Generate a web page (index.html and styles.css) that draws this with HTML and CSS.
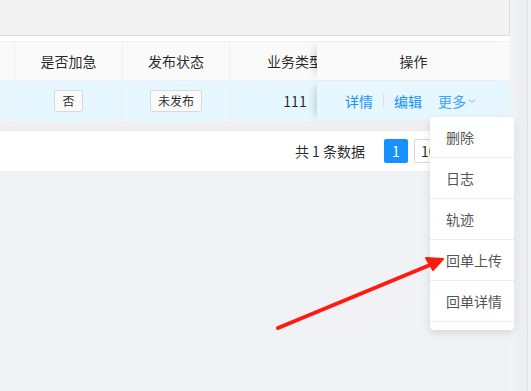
FILE: index.html
```html
<!DOCTYPE html>
<html lang="zh-CN">
<head>
  <meta charset="UTF-8">
  <title>订单列表</title>
  <link rel="stylesheet" href="styles.css">
</head>
<body>
  <div class="page">
    <div class="main">
      <div class="toolbar"></div>
      <div class="card-gap"></div>

      <!-- table, scrolled to the right, with the fixed action column -->
      <div class="table">
        <div class="tr thead">
          <div class="cell c-cut"></div>
          <div class="cell c-mid">是否加急</div>
          <div class="cell c-mid">发布状态</div>
          <div class="cell c-type"><span>业务类型</span></div>
          <div class="cell c-fixed">操作</div>
        </div>
        <div class="tr tbody">
          <div class="cell c-cut"></div>
          <div class="cell c-mid"><span class="tag">否</span></div>
          <div class="cell c-mid"><span class="tag">未发布</span></div>
          <div class="cell c-type"><span>111</span></div>
          <div class="cell c-fixed actions">
            <a class="link">详情</a>
            <i class="divider"></i>
            <a class="link">编辑</a>
            <a class="link more">更多
              <svg width="10" height="10" viewBox="0 0 10 10"><path d="M2 3.5 L5 6.5 L8 3.5" fill="none" stroke="#69b7ff" stroke-width="1"/></svg>
            </a>
          </div>
        </div>
      </div>

      <div class="table-gap"></div>

      <div class="pager">
        <span class="total">共 1 条数据</span>
        <span class="page-btn active">1</span>
        <span class="page-size">10条/页</span>
      </div>
    </div>
    <div class="gutter"></div>
    <div class="scrollbar"></div>
  </div>

  <!-- dropdown of "更多" -->
  <ul class="dropdown">
    <li>删除</li>
    <li>日志</li>
    <li>轨迹</li>
    <li>回单上传</li>
    <li>回单详情</li>
  </ul>

  <!-- annotation arrow -->
  <svg class="arrow" width="531" height="391" viewBox="0 0 531 391">
    <line x1="278" y1="328" x2="430" y2="265" stroke="#ff1a0f" stroke-width="4" stroke-linecap="round"/>
    <path d="M443 259 L426 258 L433 270 Z" fill="#ff1a0f" stroke="#ff1a0f" stroke-width="2" stroke-linejoin="round"/>
  </svg>
</body>
</html>
```

FILE: styles.css
```css
/* Global */
* {
  margin: 0;
  padding: 0;
  box-sizing: border-box;
}

body {
  background: #f0f2f5;
  font-family: "Noto Sans CJK SC", "Liberation Sans", sans-serif;
  font-size: 14px;
  color: rgba(0, 0, 0, 0.85);
  height: 391px;
  overflow: hidden;
}

.page {
  display: flex;
  height: 391px;
}

.main {
  width: 510px;
  flex-shrink: 0;
}

.gutter {
  width: 7px;
  background: #f3f3f3;
}

.scrollbar {
  flex: 1;
  background: #edeff4;
  border-right: 1px solid #e2e2e2;
  margin-right: 3px;
}

.toolbar {
  height: 36px;
  background: #f2f2f2;
  border-bottom: 1px solid #dcdcdc;
  border-right: 1px solid #dcdcdc;
}

.card-gap {
  height: 5px;
  background: #fff;
}

/* Table */
.table {
  background: #fff;
  border-top: 1px solid #f0f0f0;
}

.tr {
  display: flex;
  border-bottom: 1px solid #f0f0f0;
}

.thead {
  height: 39px;
  background: #fafafa;
}

.tbody {
  height: 41px;
  background: #e6f7ff;
}

.cell {
  display: flex;
  align-items: center;
  justify-content: center;
  border-right: 1px solid #f0f0f0;
  flex-shrink: 0;
}

.c-cut {
  width: 15px;
}

.c-mid {
  width: 108px;
}

.c-mid + .c-mid {
  width: 107px;
}

.c-type {
  width: 87px;
  overflow: hidden;
  justify-content: flex-start;
  border-right: none;
}

.c-type span {
  display: block;
  width: 130px;
  flex-shrink: 0;
  text-align: center;
}

.c-fixed {
  width: 193px;
  border-right: none;
  position: relative;
  background: inherit;
  box-shadow: -8px 0 8px -6px rgba(0, 0, 0, 0.18);
}

.tag {
  display: inline-block;
  height: 22px;
  line-height: 20px;
  padding: 0 7px;
  font-size: 12px;
  background: #fafafa;
  border: 1px solid #d9d9d9;
  border-radius: 2px;
}

.actions {
  justify-content: flex-start;
  padding-left: 28px;
}

.link {
  color: #1890ff;
  cursor: pointer;
}

.divider {
  display: inline-block;
  width: 1px;
  height: 14px;
  background: #e0e0e0;
  margin: 0 10px;
}

.more {
  margin-left: 16px;
  display: flex;
  align-items: center;
  color: #3ea0ff;
}

.more svg {
  margin-left: 1px;
}

.table-gap {
  height: 9px;
  background: #efefef;
}

/* Pagination */
.pager {
  height: 40px;
  background: #fff;
  display: flex;
  align-items: center;
  justify-content: flex-end;
  padding-right: 10px;
}

.total {
  margin-right: 19px;
}

.page-btn {
  width: 24px;
  height: 24px;
  line-height: 24px;
  text-align: center;
  border-radius: 2px;
}

.page-btn.active {
  background: #1890ff;
  color: #fff;
}

.page-size {
  margin-left: 6px;
  width: 86px;
  height: 24px;
  line-height: 22px;
  padding-left: 6px;
  border: 1px solid #d9d9d9;
  border-radius: 2px;
}

/* Dropdown */
.dropdown {
  position: absolute;
  left: 430px;
  top: 117px;
  width: 84px;
  list-style: none;
  background: #fff;
  border-radius: 4px;
  box-shadow: 0 3px 8px rgba(0, 0, 0, 0.12);
  padding-bottom: 8px;
}

.dropdown li {
  height: 41px;
  line-height: 40px;
  padding-left: 16px;
  color: #555;
  border-bottom: 1px solid #ebebeb;
}

.arrow {
  position: absolute;
  left: 0;
  top: 0;
  pointer-events: none;
}
```
